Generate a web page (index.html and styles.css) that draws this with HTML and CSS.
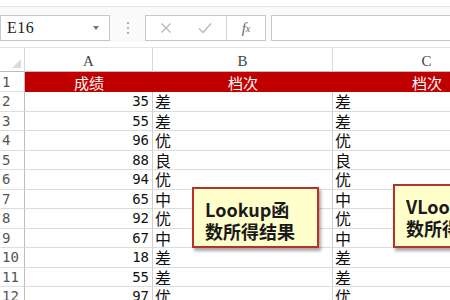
FILE: index.html
```html
<!DOCTYPE html>
<html lang="zh-CN">
<head>
<meta charset="utf-8">
<link rel="stylesheet" href="styles.css">
</head>
<body>
<div class="app">
  <div class="topline"></div>
  <div class="fbar">
    <div class="namebox"><span class="ref">E16</span><span class="arrow"></span></div>
    <div class="dots"><i></i><i></i><i></i></div>
    <div class="btns">
      <span class="btn">
        <svg width="12" height="12" viewBox="0 0 12 12"><path d="M1.5 1.5L10.5 10.5M10.5 1.5L1.5 10.5" stroke="#b9b9b9" stroke-width="1.4" fill="none"/></svg>
      </span>
      <span class="btn">
        <svg width="14" height="12" viewBox="0 0 14 12"><path d="M1 6.5L5 10.5L13 1.5" stroke="#b9b9b9" stroke-width="1.5" fill="none"/></svg>
      </span>
      <span class="fx">f<sub>x</sub></span>
    </div>
    <div class="input"></div>
  </div>
  <div class="sheet">
    <div class="grid">
      <div class="corner"><span class="tri"></span></div>
      <div class="colh">A</div>
      <div class="colh">B</div>
      <div class="colh">C</div>

      <div class="rowh r1">1</div>
      <div class="hd">成绩</div>
      <div class="hd">档次</div>
      <div class="hd">档次</div>

      <div class="rowh">2</div><div class="num">35</div><div class="txt">差</div><div class="txt">差</div>
      <div class="rowh">3</div><div class="num">55</div><div class="txt">差</div><div class="txt">差</div>
      <div class="rowh">4</div><div class="num">96</div><div class="txt">优</div><div class="txt">优</div>
      <div class="rowh">5</div><div class="num">88</div><div class="txt">良</div><div class="txt">良</div>
      <div class="rowh">6</div><div class="num">94</div><div class="txt">优</div><div class="txt">优</div>
      <div class="rowh">7</div><div class="num">65</div><div class="txt">中</div><div class="txt">中</div>
      <div class="rowh">8</div><div class="num">92</div><div class="txt">优</div><div class="txt">优</div>
      <div class="rowh">9</div><div class="num">67</div><div class="txt">中</div><div class="txt">中</div>
      <div class="rowh">10</div><div class="num">18</div><div class="txt">差</div><div class="txt">差</div>
      <div class="rowh">11</div><div class="num">55</div><div class="txt">差</div><div class="txt">差</div>
      <div class="rowh">12</div><div class="num">97</div><div class="txt">优</div><div class="txt">优</div>
    </div>
    <div class="note note1">Lookup函<br>数所得结果</div>
    <div class="note note2">VLookup函<br>数所得结果</div>
  </div>
</div>
</body>
</html>
```

FILE: styles.css
```css
* { box-sizing: border-box; }
html, body { margin: 0; padding: 0; }
body {
  width: 450px; height: 300px; overflow: hidden;
  background: #ffffff;
  font-family: "Noto Sans CJK SC", "Noto Sans", sans-serif;
}
.app { width: 450px; height: 300px; overflow: hidden; display: flex; flex-direction: column; }
.topline { height: 7px; border-bottom: 1px solid #e6e6e6; background: #fff; }
.fbar {
  display: flex; align-items: center;
  height: 35px; padding-top: 8px; padding-bottom: 1px;
  background: #fafafa;
}
.namebox {
  width: 110px; height: 26px; border: 1px solid #c8c8c8; background: #fff;
  display: flex; align-items: center; justify-content: space-between;
  padding: 0 7px 0 6px;
}
.ref { font-family: "Liberation Serif", "DejaVu Serif", serif; font-size: 16px; color: #222; letter-spacing: 0.5px; }
.arrow { width: 0; height: 0; border-left: 3.5px solid transparent; border-right: 3.5px solid transparent; border-top: 4px solid #777; margin-right: 3px; }
.dots { width: 35px; display: flex; flex-direction: column; align-items: center; gap: 3px; }
.dots i { display: block; width: 2px; height: 2px; background: #b0b0b0; }
.btns {
  width: 121px; height: 26px; border: 1px solid #c8c8c8; background: #fff;
  display: flex; align-items: center;
}
.btn { width: 40px; display: flex; justify-content: center; align-items: center; }
.btn:first-child { width: 39px; }
.fx {
  margin-left: 1px; width: 39px; height: 24px; border-left: 1px solid #d4d4d4;
  display: flex; justify-content: center; align-items: center;
  font-family: "Liberation Serif", serif; font-style: italic; font-size: 15px; color: #666;
}
.fx sub { font-size: 10px; vertical-align: -2px; }
.input { flex: 1; margin-left: 5px; height: 26px; border: 1px solid #c8c8c8; border-right: none; background: #fff; }

.sheet { position: relative; flex: 1; overflow: hidden; margin-top: 5px; }
.grid {
  display: grid;
  grid-template-columns: 25px 128px 180px 188px;
  grid-template-rows: 25px 20px repeat(11, 19.5px);
  width: 521px;
}
.corner, .colh {
  background: #fff;
  border-right: 1px solid #d8d8d8;
  border-top: 1px solid #e4e4e4;
  border-bottom: 1px solid #bdbdbd;
}
.corner { position: relative; }
.tri {
  position: absolute; right: 3px; bottom: 3px; width: 0; height: 0;
  border-left: 9px solid transparent; border-bottom: 9px solid #dcdcdc;
}
.colh {
  font-family: "Liberation Serif", "DejaVu Serif", serif; font-size: 15px; color: #444;
  display: flex; align-items: center; justify-content: center; padding-top: 4px;
}
.rowh {
  font-family: "DejaVu Sans Mono", monospace; font-size: 14px; color: #555;
  border-right: 1px solid #bdbdbd; border-bottom: 1px solid #dedede;
  background: #fff; padding-left: 2px;
  display: flex; align-items: center;
}
.hd {
  background: #c00000; color: #fff; font-size: 15px;
  display: flex; align-items: center; justify-content: center;
  line-height: 1;
}
.num, .txt {
  border-bottom: 1px solid #dcdcdc; border-right: 1px solid #cfcfcf;
  display: flex; align-items: center; color: #111;
}
.num {
  justify-content: flex-end; padding-right: 3px;
  font-family: "DejaVu Sans Mono", monospace; font-size: 14px;
}
.txt { padding-left: 2px; font-size: 16px; line-height: 1; }

.note {
  position: absolute;
  background: #ffffcc;
  border: 2px solid #b8302a;
  box-shadow: 2px 3px 3px rgba(0,0,0,0.35);
  font-weight: bold; font-size: 18px; line-height: 22px; color: #1a1a1a;
  padding: 9px 0 0 11px;
}
.note1 { left: 192px; top: 140px; width: 127px; height: 61px; }
.note2 { left: 393px; top: 137px; width: 130px; height: 64px; }
```
